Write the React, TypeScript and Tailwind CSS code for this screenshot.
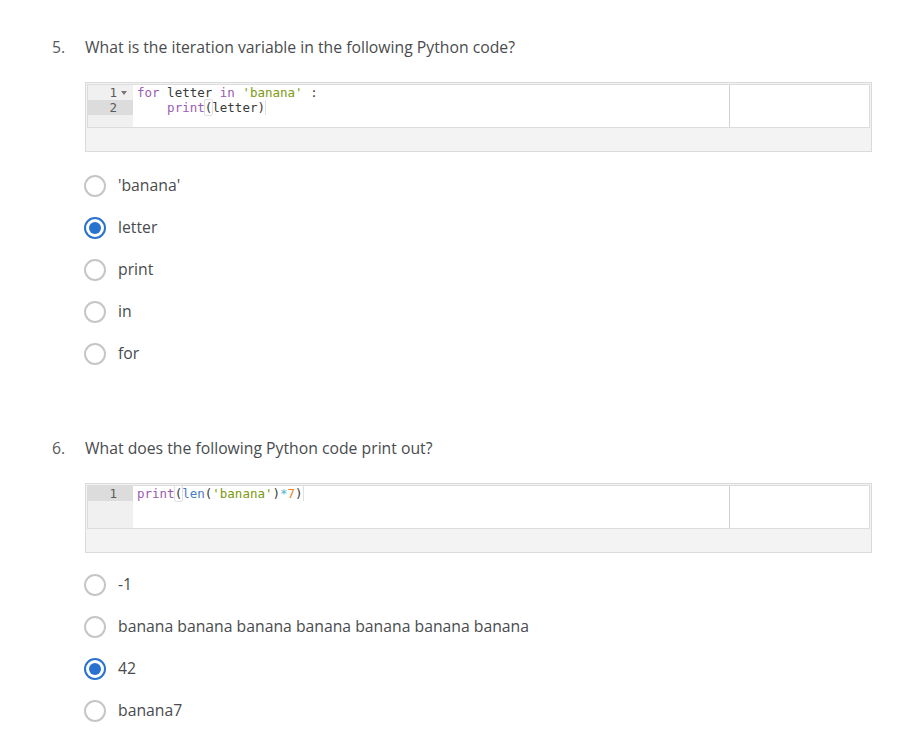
import type { ReactNode } from "react";

type Option = { label: string; checked?: boolean };

function Radio({ checked }: { checked?: boolean }) {
  return checked ? (
    <span className="flex h-[22px] w-[22px] shrink-0 items-center justify-center rounded-full border-2 border-[#2a72d0] bg-white">
      <span className="h-[12px] w-[12px] rounded-full bg-[#2a72d0]" />
    </span>
  ) : (
    <span className="h-[22px] w-[22px] shrink-0 rounded-full border-2 border-[#c6c6c6] bg-white" />
  );
}

function CodeBox({ lines, active }: { lines: { num: number; fold?: boolean; code: ReactNode }[]; active: number }) {
  return (
    <div className="ml-[33px] w-[787px] border border-[#dadada] bg-[#f3f3f3] p-px">
      <div className="flex h-[44px] border border-[#dcdcdc] bg-white">
        <div className="w-[45px] shrink-0 bg-[#f0f0f0]">
          {lines.map((l) => (
            <div
              key={l.num}
              className={
                "relative h-[15px] pr-[16px] text-right text-[12.5px] leading-[15px] text-[#5a5a5a] " +
                (l.num === active ? "bg-[#dcdcdc]" : "")
              }
            >
              {l.num}
              {l.fold && (
                <span className="absolute right-[6px] top-[6px] h-0 w-0 border-x-[3px] border-t-[4px] border-x-transparent border-t-[#777]" />
              )}
            </div>
          ))}
        </div>
        <div className="flex-1 pl-[4px] text-[12.5px] leading-[15px] text-[#3a3a3a]">
          {lines.map((l) => (
            <div key={l.num} className="h-[15px] whitespace-pre">
              {l.code}
            </div>
          ))}
        </div>
        <div className="w-[140px] shrink-0 border-l border-[#c9d3de]" />
      </div>
      <div className="h-[22px]" />
    </div>
  );
}

function Question({
  n,
  text,
  code,
  options,
  gap,
}: {
  n: number;
  text: string;
  code: ReactNode;
  options: Option[];
  gap: string;
}) {
  return (
    <div>
      <div className="flex h-[24px] items-center text-[15.75px] text-[#494c4e]">
        <span className="w-[33px] text-[#565a5c]">{n}.</span>
        <span>{text}</span>
      </div>
      <div className="mt-[22px]">{code}</div>
      <div className={gap}>
        {options.map((o) => (
          <div key={o.label} className="ml-[32px] flex h-[42px] items-center gap-[12px] text-[15.75px] text-[#494c4e]">
            <Radio checked={o.checked} />
            <span>{o.label}</span>
          </div>
        ))}
      </div>
    </div>
  );
}

const kw = "text-[#9a5cb0]";
const str = "text-[#7c9a10]";
const mono = { fontFamily: '"DejaVu Sans Mono", "Liberation Mono", monospace' };

export default function App() {
  return (
    <div
      className="min-h-[750px] w-[916px] bg-white pl-[52px] pt-[36px]"
      style={{ fontFamily: '"Open Sans", "Noto Sans", sans-serif' }}
    >
      <Question
        n={5}
        text="What is the iteration variable in the following Python code?"
        gap="mt-[13px]"
        code={
          <div style={mono}>
            <CodeBox
              active={2}
              lines={[
                {
                  num: 1,
                  fold: true,
                  code: (
                    <>
                      <span className={kw}>for</span> letter <span className={kw}>in</span>{" "}
                      <span className={str}>'banana'</span> :
                    </>
                  ),
                },
                {
                  num: 2,
                  code: (
                    <>
                      {"    "}
                      <span className={kw}>print</span>
                      <span className="rounded-[2px] border border-[#e0e0e0] [margin:-1px]">(</span>letter
                      <span className="border-r border-[#e0e0e0]">)</span>
                    </>
                  ),
                },
              ]}
            />
          </div>
        }
        options={[
          { label: "'banana'" },
          { label: "letter", checked: true },
          { label: "print" },
          { label: "in" },
          { label: "for" },
        ]}
      />
      <div className="mt-[62px]">
        <Question
          n={6}
          text="What does the following Python code print out?"
          gap="mt-[11px]"
          code={
            <div style={mono}>
              <CodeBox
                active={1}
                lines={[
                  {
                    num: 1,
                    code: (
                      <>
                        <span className={kw}>print</span>
                        <span className="rounded-[2px] border border-[#e0e0e0] [margin:-1px]">(</span>
                        <span className="text-[#4a7cc4]">len</span>(<span className={str}>'banana'</span>)
                        <span className="text-[#4cb8cc]">*</span>
                        <span className="text-[#e8862a]">7</span>
                        <span className="border-r border-[#e0e0e0]">)</span>
                      </>
                    ),
                  },
                ]}
              />
            </div>
          }
          options={[
            { label: "-1" },
            { label: "banana banana banana banana banana banana banana" },
            { label: "42", checked: true },
            { label: "banana7" },
          ]}
        />
      </div>
    </div>
  );
}
